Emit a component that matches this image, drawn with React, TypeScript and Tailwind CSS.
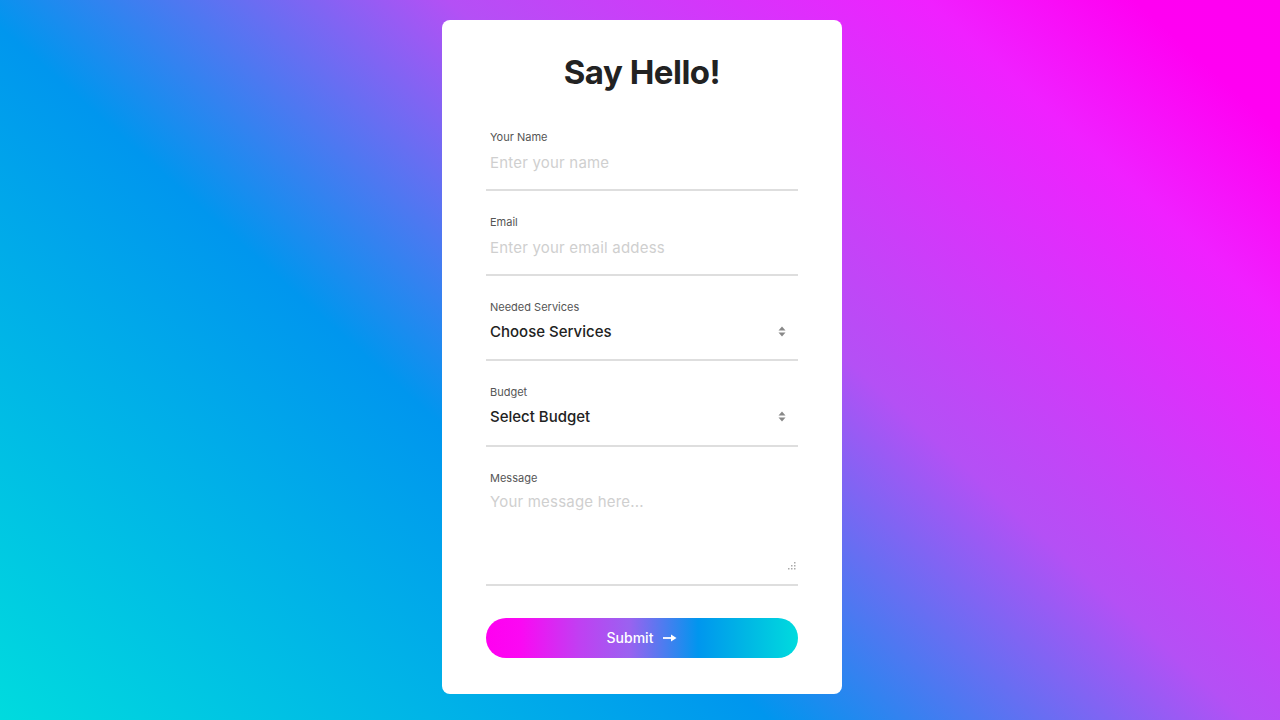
import type { ReactNode } from 'react';

const font = { fontFamily: 'Inter, "Noto Sans", sans-serif' };

function Field({ label, children }: { label: string; children: ReactNode }) {
  return (
    <div className="relative border-b-2 border-[#dedede] pb-[14px]">
      <label className="block pl-1 text-[11px] leading-4 text-[#555]">{label}</label>
      <div className="mt-1">{children}</div>
    </div>
  );
}

function SelectArrows() {
  return (
    <svg
      className="pointer-events-none absolute right-[12px] top-[27px]"
      width="8"
      height="11"
      viewBox="0 0 8 11"
    >
      <path d="M4 0.5 L7.5 4.5 L0.5 4.5 Z" fill="#888" />
      <path d="M4 10.5 L7.5 6.5 L0.5 6.5 Z" fill="#888" />
    </svg>
  );
}

function Grip() {
  return (
    <svg
      className="pointer-events-none absolute bottom-[14px] right-[2px]"
      width="8"
      height="8"
      viewBox="0 0 8 8"
    >
      <rect x="6" y="0" width="1.5" height="1.5" fill="#aaa" />
      <rect x="3" y="3" width="1.5" height="1.5" fill="#aaa" />
      <rect x="6" y="3" width="1.5" height="1.5" fill="#aaa" />
      <rect x="0" y="6" width="1.5" height="1.5" fill="#aaa" />
      <rect x="3" y="6" width="1.5" height="1.5" fill="#aaa" />
      <rect x="6" y="6" width="1.5" height="1.5" fill="#aaa" />
    </svg>
  );
}

const inputClass =
  'h-[26px] w-full bg-transparent pl-1 text-[15px] tracking-[0.2px] text-[#222] outline-none placeholder:text-[#cfcfcf]';

const selectClass =
  'h-[26px] w-full appearance-none bg-transparent pl-1 text-[15px] font-medium text-[#222] outline-none';

export default function App() {
  return (
    <div
      className="min-h-[720px] w-full bg-[linear-gradient(42deg,#00dbde_0%,#0096ee_37%,#b450f5_60%,#f020ff_83%,#ff00f2_93%,#ff00f0_100%)] pl-1 pt-[20px]"
      style={font}
    >
      <form className="mx-auto flex w-[400px] flex-col rounded-lg bg-white px-[44px] pb-[36px] pt-8">
        <h1 className="text-center text-[33px] font-bold leading-[41px] tracking-[-0.5px] text-[#222]">
          Say Hello!
        </h1>

        <div className="mt-[36px] flex flex-col gap-[23px]">
          <Field label="Your Name">
            <input type="text" placeholder="Enter your name" className={inputClass} />
          </Field>

          <Field label="Email">
            <input type="email" placeholder="Enter your email addess" className={inputClass} />
          </Field>

          <Field label="Needed Services">
            <select defaultValue="" className={selectClass}>
              <option value="">Choose Services</option>
              <option>Web Design</option>
              <option>Development</option>
              <option>Branding</option>
            </select>
            <SelectArrows />
          </Field>

          <Field label="Budget">
            <select defaultValue="" className={selectClass}>
              <option value="">Select Budget</option>
              <option>$1,000 - $5,000</option>
              <option>$5,000 - $10,000</option>
            </select>
            <SelectArrows />
          </Field>

          <div className="relative border-b-2 border-[#dedede] pb-[15px]">
            <label className="block pl-1 text-[11px] leading-4 text-[#555]">Message</label>
            <textarea
              placeholder="Your message here..."
              className="mt-1 block h-[79px] w-full resize-none bg-transparent pl-1 text-[15px] leading-6 tracking-[0.2px] text-[#222] outline-none placeholder:text-[#cfcfcf]"
            />
            <Grip />
          </div>
        </div>

        <button
          type="button"
          className="mt-[32px] flex h-10 w-full items-center justify-center gap-[10px] rounded-full bg-[linear-gradient(to_right,#ff00f0_0%,#fb08f3_11%,#c040f2_30%,#9a62f0_46%,#0096ee_68%,#00b8e4_84%,#00dbde_100%)] text-[14px] font-medium text-white"
        >
          Submit
          <svg width="14" height="8" viewBox="0 0 14 8">
            <path d="M0 4 H9" stroke="white" strokeWidth="1.8" />
            <path d="M8 0.5 L13.5 4 L8 7.5 Z" fill="white" />
          </svg>
        </button>
      </form>
    </div>
  );
}
